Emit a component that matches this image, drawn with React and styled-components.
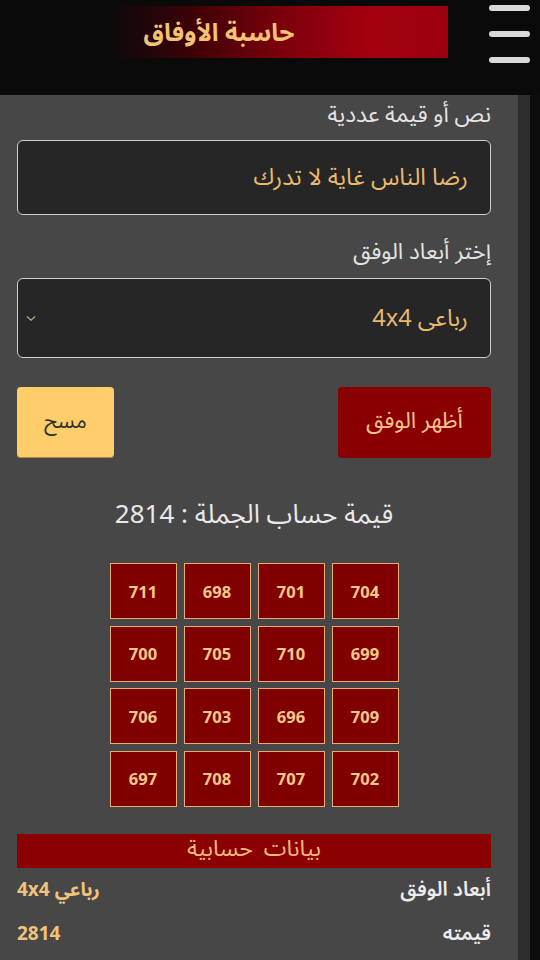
import React from "react";
import styled, { createGlobalStyle } from "styled-components";

const GlobalStyle = createGlobalStyle`
  html, body {
    margin: 0;
    padding: 0;
    background: #474747;
  }
  body {
    font-family: "Noto Sans Arabic", "Noto Sans", "DejaVu Sans", sans-serif;
  }
`;

const SQUARE = [
  [711, 698, 701, 704],
  [700, 705, 710, 699],
  [706, 703, 696, 709],
  [697, 708, 707, 702],
];

const App = () => (
  <Page dir="rtl">
    <GlobalStyle />
    <Header>
      <MenuButton aria-label="menu">
        <MenuLine />
        <MenuLine />
        <MenuLine />
      </MenuButton>
      <TitleBanner>حاسبة الأوفاق</TitleBanner>
    </Header>
    <Body>
      {/* rtl row: first child sits on the right edge */}
      <Track />
      <Content>
        <Label $top={7}>نص أو قيمة عددية</Label>
        <Field $top={12} $height={75}>
          رضا الناس غاية لا تدرك
        </Field>
        <Label $top={24}>إختر أبعاد الوفق</Label>
        <Field $top={13} $height={80}>
          <span>رباعى 4x4</span>
          <Chevron viewBox="0 0 12 8">
            <path d="M1 1.5 L6 6 L11 1.5" />
          </Chevron>
        </Field>
        <ButtonRow>
          <ShowButton>أظهر الوفق</ShowButton>
          <ClearButton>مسح</ClearButton>
        </ButtonRow>
        <Total>قيمة حساب الجملة : 2814</Total>
        <Grid dir="ltr">
          {SQUARE.flat().map((n, i) => (
            <Cell key={i}>{n}</Cell>
          ))}
        </Grid>
        <SectionBar>بيانات حسابية</SectionBar>
        <InfoRow>
          <InfoLabel>أبعاد الوفق</InfoLabel>
          <InfoValue>رباعي 4x4</InfoValue>
        </InfoRow>
        <InfoRow>
          <InfoLabel>قيمته</InfoLabel>
          <InfoValue>2814</InfoValue>
        </InfoRow>
      </Content>
    </Body>
  </Page>
);

const Page = styled.div`
  width: 540px;
  height: 960px;
  overflow: hidden;
  display: flex;
  flex-direction: column;
  background: #474747;
`;

const Header = styled.header`
  height: 95px;
  flex-shrink: 0;
  background: #0a0a0a;
  display: flex;
  align-items: flex-start;
  padding-right: 10px;
`;

const MenuButton = styled.div`
  width: 41px;
  height: 58px;
  margin-top: 5px;
  display: flex;
  flex-direction: column;
  justify-content: space-between;
`;

const MenuLine = styled.span`
  display: block;
  height: 6px;
  border-radius: 3px;
  background: #d9d9d9;
`;

const TitleBanner = styled.div`
  width: 448px;
  height: 52px;
  margin-top: 6px;
  margin-right: 41px;
  display: flex;
  align-items: center;
  justify-content: center;
  background: linear-gradient(
    to right,
    #0a0a0a 0%,
    #0a0a0a 24%,
    #3a0206 42%,
    #7a000b 62%,
    #a3000f 82%,
    #9c0010 100%
  );
  color: #f2c275;
  font-size: 24.5px;
  font-weight: 700;
  padding: 2px 10px 0 0;
  box-sizing: border-box;
`;

const Body = styled.div`
  flex: 1;
  display: flex;
`;

const Content = styled.main`
  flex: 1;
  padding: 0 27px 0 17px;
  display: flex;
  flex-direction: column;
`;

const Track = styled.div`
  width: 12px;
  background: #2d2d2d;
  border-right: 10px solid #0d0d0d;
`;

const Label = styled.div`
  margin-top: ${(p) => p.$top}px;
  height: 26px;
  line-height: 26px;
  font-size: 22.5px;
  color: #e4e4e4;
`;

const Field = styled.div`
  margin-top: ${(p) => p.$top}px;
  height: ${(p) => p.$height}px;
  box-sizing: border-box;
  border: 1.5px solid #cfcfcf;
  border-radius: 6px;
  background: #262626;
  display: flex;
  align-items: center;
  justify-content: space-between;
  padding: 0 22px 0 8px;
  color: #e9b96c;
  font-size: 23.5px;
`;

const Chevron = styled.svg`
  width: 10px;
  height: 7px;
  fill: none;
  stroke: #bdb39a;
  stroke-width: 1.4;
`;

const ButtonRow = styled.div`
  margin-top: 29px;
  height: 71px;
  display: flex;
  justify-content: space-between;
`;

const BaseButton = styled.button`
  font-family: inherit;
  border: none;
  border-radius: 4px;
  cursor: pointer;
  padding: 0 0 4px;
`;

const ShowButton = styled(BaseButton)`
  width: 153px;
  font-size: 22.5px;
  background: #8a0000;
  color: #f7c48d;
`;

const ClearButton = styled(BaseButton)`
  width: 97px;
  font-size: 21px;
  background: #ffcd69;
  color: #2e2e2e;
  box-shadow: inset 0 -1px 0 #b08a3c;
`;

const Total = styled.div`
  margin-top: 41px;
  height: 32px;
  line-height: 32px;
  text-align: center;
  font-size: 26px;
  color: #e9e9e9;
`;

const Grid = styled.div`
  margin: 32px auto 0;
  display: grid;
  grid-template-columns: repeat(4, 67px);
  grid-auto-rows: 56px;
  column-gap: 7px;
  row-gap: 6.5px;
`;

const Cell = styled.div`
  box-sizing: border-box;
  border: 1.5px solid #e6ad74;
  background: #800000;
  display: flex;
  align-items: center;
  justify-content: center;
  font-family: "Open Sans", "Noto Sans", sans-serif;
  font-weight: 700;
  font-size: 16.5px;
  color: #f6c889;
`;

const SectionBar = styled.div`
  margin-top: 27px;
  height: 34px;
  line-height: 30px;
  background: #8b0000;
  text-align: center;
  color: #f2b97c;
  font-size: 23px;
  word-spacing: 5px;
`;

const InfoRow = styled.div`
  height: 44px;
  display: flex;
  align-items: center;
  justify-content: space-between;
`;

const InfoLabel = styled.span`
  font-size: 20px;
  font-weight: 600;
  color: #ececec;
`;

const InfoValue = styled.span`
  font-size: 19px;
  font-weight: 700;
  color: #f0c27a;
  font-family: "Noto Sans Arabic", "Open Sans", "DejaVu Sans", sans-serif;
`;

export default App;
